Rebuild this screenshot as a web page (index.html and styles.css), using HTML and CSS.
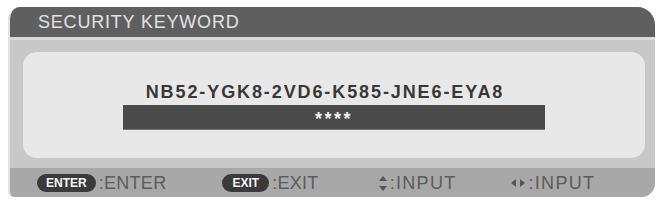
FILE: index.html
```html
<!DOCTYPE html>
<html lang="en">
<head>
<meta charset="UTF-8">
<title>Security Keyword</title>
<link rel="stylesheet" href="styles.css">
</head>
<body>

<div class="window">
  <div class="title">SECURITY KEYWORD</div>

  <div class="body">
    <div class="panel">
      <div class="keyword">NB52-YGK8-2VD6-K585-JNE6-EYA8</div>
      <div class="input-bar">****</div>
    </div>
  </div>

  <div class="footer">
    <div class="hint hint-enter"><span class="pill">ENTER</span>:ENTER</div>
    <div class="hint hint-exit"><span class="pill pill-exit">EXIT</span>:EXIT</div>
    <div class="hint hint-input hint-updown">
      <svg class="arrow" width="8" height="15" viewBox="0 0 8 15">
        <polygon points="4,0 8,5 0,5" fill="#555"/>
        <polygon points="0,10 8,10 4,15" fill="#555"/>
      </svg>:INPUT
    </div>
    <div class="hint hint-input hint-leftright">
      <svg class="arrow" width="14" height="8" viewBox="0 0 14 8">
        <polygon points="0,4 5,0 5,8" fill="#555"/>
        <polygon points="9,0 14,4 9,8" fill="#555"/>
      </svg>:INPUT
    </div>
  </div>
</div>

</body>
</html>
```

FILE: styles.css
```css
body {
  margin: 0;
  padding: 0;
  background-color: #fff;
  font-family: 'Liberation Sans', Arial, sans-serif;
}
.window {
  margin: 7px 0 0 8px;
  width: 647px;
  height: 190px;
  background-color: #c8c8c8;
  border-radius: 12px 18px 14px 6px;
  border-left: 2px solid #e2e2e2;
  box-sizing: border-box;
  overflow: hidden;
  display: flex;
  flex-direction: column;
}
.title {
  height: 30px;
  background-color: #5f5f5f;
  color: #e2e2e2;
  font-size: 18px;
  letter-spacing: 0.8px;
  line-height: 31px;
  padding-left: 28px;
  border-bottom: 3px solid #d9d9d9;
}
.body {
  padding: 12px 10px 10px 13px;
}
.panel {
  height: 106px;
  background-color: #e8e8e8;
  border-radius: 14px;
  display: flex;
  flex-direction: column;
  align-items: center;
  padding-top: 30px;
  box-sizing: border-box;
}
.keyword {
  font-size: 18px;
  font-weight: bold;
  letter-spacing: 1.9px;
  color: #383838;
  line-height: 20px;
  margin-right: 18px;
}
.input-bar {
  margin-top: 3px;
  width: 422px;
  height: 24px;
  background-color: #4a4a4a;
  border-bottom: 1px solid #777;
  color: #f2f2f2;
  font-size: 18px;
  font-weight: bold;
  letter-spacing: 2.5px;
  text-align: center;
  line-height: 29px;
}
.footer {
  flex: 1;
  background-color: #a8a8a8;
  display: flex;
  align-items: center;
  color: #5c5c5c;
  font-size: 18px;
  letter-spacing: 0.3px;
  padding-top: 1px;
}
.hint {
  display: flex;
  align-items: center;
}
.hint-input {
  letter-spacing: 1.3px;
}
.hint-enter {
  margin-left: 27px;
}
.hint-exit {
  margin-left: 56px;
}
.hint-updown {
  margin-left: 60px;
}
.hint-leftright {
  margin-left: 55px;
}
.pill {
  display: inline-block;
  background-color: #3a3a3a;
  color: #f5f5f5;
  font-size: 12px;
  font-weight: bold;
  letter-spacing: 0;
  height: 18px;
  line-height: 18px;
  padding: 0 9px;
  border-radius: 9px;
  margin-right: 3px;
}
.pill-exit {
  padding: 0 10px;
}
.arrow {
  margin-right: 3px;
}
```
